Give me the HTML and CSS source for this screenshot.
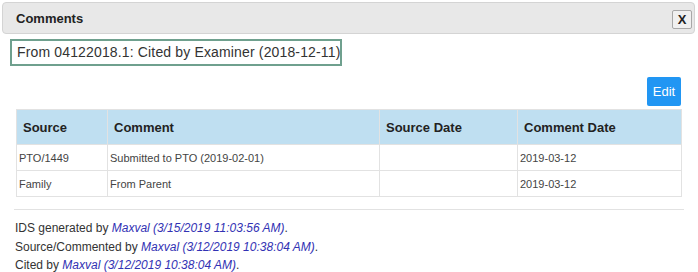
FILE: index.html
```html
<!DOCTYPE html>
<html lang="en">
<head>
    <meta charset="UTF-8">
    <title>Comments</title>
    <link rel="stylesheet" href="styles.css">
</head>
<body>

<div class="dialog">
    <!-- Title bar -->
    <div class="dialog-header">
        <span class="dialog-title">Comments</span>
        <button class="close-btn">X</button>
    </div>

    <div class="dialog-body">
        <div class="cite-box">From 04122018.1: Cited by Examiner (2018-12-11)</div>

        <div class="toolbar">
            <button class="edit-btn">Edit</button>
        </div>

        <table class="comments-table">
            <colgroup>
                <col class="col-source">
                <col class="col-comment">
                <col class="col-source-date">
                <col class="col-comment-date">
            </colgroup>
            <thead>
                <tr>
                    <th>Source</th>
                    <th>Comment</th>
                    <th>Source Date</th>
                    <th>Comment Date</th>
                </tr>
            </thead>
            <tbody>
                <tr>
                    <td>PTO/1449</td>
                    <td>Submitted to PTO (2019-02-01)</td>
                    <td></td>
                    <td>2019-03-12</td>
                </tr>
                <tr>
                    <td>Family</td>
                    <td>From Parent</td>
                    <td></td>
                    <td>2019-03-12</td>
                </tr>
            </tbody>
        </table>

        <hr class="divider">

        <div class="history">
            <p>IDS generated by <em>Maxval (3/15/2019 11:03:56 AM)</em>.</p>
            <p>Source/Commented by <em>Maxval (3/12/2019 10:38:04 AM)</em>.</p>
            <p>Cited by <em>Maxval (3/12/2019 10:38:04 AM)</em>.</p>
        </div>
    </div>
</div>

</body>
</html>
```

FILE: styles.css
```css
html {
    overflow: hidden;
}
body {
    margin: 0;
    font-family: Arial, "Liberation Sans", sans-serif;
    color: #333;
    background-color: #fff;
}
.dialog-header {
    margin: 2px 3px 0 2px;
    height: 30px;
    background-color: #e8e8e8;
    border: 1px solid #d4d4d4;
    border-radius: 4px;
    display: flex;
    align-items: center;
    justify-content: space-between;
    padding: 0 2px 0 13px;
}
.dialog-title {
    font-size: 13px;
    font-weight: bold;
    color: #222;
}
.close-btn {
    width: 20px;
    height: 19px;
    padding: 0;
    margin-top: 3px;
    border: 1px solid #a8a8a8;
    border-radius: 2px;
    background-color: #f0f0f0;
    font-family: Arial, "Liberation Sans", sans-serif;
    font-size: 13px;
    font-weight: bold;
    color: #222;
    line-height: 17px;
}
.dialog-body {
    padding: 5px 14px 0 10px;
}
.cite-box {
    box-sizing: border-box;
    width: 332px;
    height: 27px;
    border: 2px solid #6fa08e;
    padding: 0 0 0 5px;
    font-size: 14px;
    line-height: 23px;
    letter-spacing: 0.15px;
    white-space: nowrap;
    overflow: hidden;
    color: #333;
}
.toolbar {
    display: flex;
    justify-content: flex-end;
    margin: 11px 3px 0 0;
}
.edit-btn {
    width: 34px;
    height: 29px;
    padding: 0;
    border: none;
    border-radius: 2px;
    background-color: #2196f3;
    color: #fff;
    font-family: Arial, "Liberation Sans", sans-serif;
    font-size: 13px;
}
.comments-table {
    margin: 3px 0 0 6px;
    width: 665px;
    table-layout: fixed;
    border-collapse: collapse;
    font-size: 11px;
}
.col-source { width: 91px; }
.col-comment { width: 272px; }
.col-source-date { width: 138px; }
.col-comment-date { width: 164px; }
.comments-table th,
.comments-table td {
    border: 1px solid #e2e2e2;
    text-align: left;
    white-space: nowrap;
    overflow: hidden;
}
.comments-table th {
    height: 34px;
    padding: 0 6px;
    background-color: #bfdff1;
    font-size: 13px;
    color: #222;
}
.comments-table td {
    height: 25px;
    padding: 0 2px;
    color: #444;
}
.divider {
    margin: 12px 0 0 4px;
    border: none;
    border-top: 1px solid #e2e2e2;
    height: 0;
}
.history {
    margin: 9px 0 0 5px;
    font-size: 12px;
    color: #333;
}
.history p {
    margin: 0;
    line-height: 18.5px;
}
.history em {
    color: #3232b4;
}
```
